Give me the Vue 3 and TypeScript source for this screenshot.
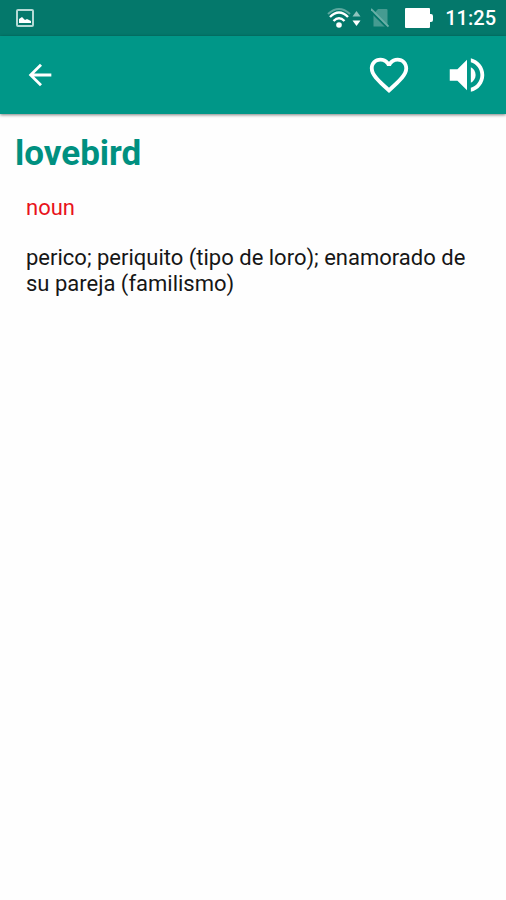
<script setup lang="ts">
import { ref } from 'vue'

interface Entry {
  word: string
  partOfSpeech: string
  definition: string
}

const entry: Entry = {
  word: 'lovebird',
  partOfSpeech: 'noun',
  definition: 'perico; periquito (tipo de loro); enamorado de su pareja (familismo)',
}

const favourite = ref(false)
</script>

<template>
  <div class="screen">
    <div class="status">
      <svg class="picture" viewBox="0 0 18 18" aria-hidden="true">
        <rect x="1" y="1" width="16" height="16" rx="1" fill="none" stroke="#b5dad5" stroke-width="2" />
        <path d="M3 14V10l3-2 3 3 2-1 4 2v2z" fill="#fff" />
      </svg>
      <div class="tray">
        <svg class="wifi" viewBox="0 0 34 22" aria-hidden="true">
          <path d="M1 7Q12-3 23 7" fill="none" stroke="#5ca79e" stroke-width="2" />
          <g fill="none" stroke="#fff" stroke-width="2.4">
            <path d="M3 10Q12 1 21 10" />
            <path d="M6.500 14Q12 8.500 17.500 14" />
          </g>
          <circle cx="12" cy="18" r="2.800" fill="#fff" />
          <path d="M25.500 9.500L29.500 4l4 5.500z" fill="#8fc4bd" />
          <path d="M25.500 13.500h8L29.500 19z" fill="#fff" />
        </svg>
        <svg class="sim" viewBox="0 0 18 20" aria-hidden="true">
          <path d="M7 1h8.500q1 0 1 1v16.500h-14V6z" fill="#469b91" />
          <path d="M0 3.500L16 19.500" stroke="#04786b" stroke-width="2" />
          <path d="M0 1L17.500 18.500" stroke="#6ab0a7" stroke-width="1.800" />
        </svg>
        <svg class="battery" viewBox="0 0 28 20" aria-hidden="true">
          <path d="M1 0h23q1 0 1 1v5h1q2 0 2 2v4q0 2-2 2h-1v5q0 1-1 1H1q-1 0-1-1V1q0-1 1-1z" fill="#fff" />
        </svg>
        <time class="clock">11:25</time>
      </div>
    </div>
    <header class="toolbar">
      <button type="button" class="action" aria-label="Back">
        <svg class="arrow" viewBox="0 0 24 24">
          <path d="M20 11H7.830l5.590-5.590L12 4l-8 8 8 8 1.410-1.410L7.830 13H20v-2z" />
        </svg>
      </button>
      <div class="actions">
        <button type="button" class="action" aria-label="Favourite" :aria-pressed="favourite" @click="favourite = !favourite">
          <svg class="glyph" viewBox="0 0 24 24">
            <path v-if="favourite" d="M12 21.350l-1.450-1.320C5.400 15.360 2 12.280 2 8.500 2 5.420 4.420 3 7.500 3c1.740 0 3.410.81 4.500 2.090C13.090 3.810 14.760 3 16.500 3 19.580 3 22 5.420 22 8.500c0 3.780-3.400 6.860-8.550 11.540L12 21.350z" />
            <path v-else d="M16.500 3c-1.740 0-3.410.81-4.500 2.090C10.910 3.810 9.240 3 7.500 3 4.420 3 2 5.420 2 8.500c0 3.780 3.400 6.860 8.550 11.540L12 21.350l1.450-1.320C18.600 15.360 22 12.280 22 8.500 22 5.420 19.580 3 16.500 3zm-4.400 15.550l-.1.100-.1-.1C7.140 14.240 4 11.390 4 8.500 4 6.500 5.500 5 7.500 5c1.540 0 3.040.99 3.570 2.360h1.870C13.460 5.990 14.960 5 16.500 5c2 0 3.500 1.500 3.500 3.500 0 2.890-3.140 5.740-7.900 10.050z" />
          </svg>
        </button>
        <button type="button" class="action" aria-label="Listen">
          <svg class="glyph" viewBox="0 0 24 24">
            <path d="M3 9v6h4l5 5V4L7 9H3zm13.500 3c0-1.770-1.020-3.290-2.500-4.030v8.050c1.480-.73 2.500-2.250 2.500-4.020zM14 3.230v2.060c2.890.86 5 3.540 5 6.710s-2.110 5.850-5 6.710v2.060c4.010-.91 7-4.490 7-8.770s-2.990-7.860-7-8.770z" />
          </svg>
        </button>
      </div>
    </header>
    <main class="entry">
      <h1 class="word">{{ entry.word }}</h1>
      <section class="sense">
        <p class="part">{{ entry.partOfSpeech }}</p>
        <p class="definition">{{ entry.definition }}</p>
      </section>
    </main>
  </div>
</template>

<style>
body {
  margin: 0;
  background: #fefefe;
}
</style>

<style scoped>
.screen {
  min-height: 100vh;
  font-family: Roboto, "Liberation Sans", sans-serif;
  background: #fefefe;
}

.status {
  display: flex;
  align-items: center;
  justify-content: space-between;
  height: 36px;
  padding: 0 10px 0 16px;
  background: #04786b;
}

.tray {
  display: flex;
  align-items: center;
}

.picture {
  width: 18px;
  height: 18px;
}

.wifi {
  width: 34px;
  height: 22px;
  margin-right: 10px;
}

.sim {
  width: 18px;
  height: 20px;
  margin-right: 16px;
}

.battery {
  width: 28px;
  height: 20px;
  margin-right: 12px;
}

.clock {
  color: #fff;
  font-size: 20px;
  font-weight: 500;
  line-height: 24px;
}

.toolbar {
  display: flex;
  align-items: center;
  justify-content: space-between;
  height: 78px;
  padding: 0 15px 0 16px;
  background: #009788;
  box-shadow: 0 1px 3px rgba(0, 0, 0, 0.5);
}

.actions {
  display: flex;
  gap: 30px;
}

.action {
  display: flex;
  align-items: center;
  justify-content: center;
  width: 48px;
  height: 48px;
  padding: 0;
  border: 0;
  background: none;
  cursor: pointer;
}

.action svg {
  fill: #fff;
}

.arrow {
  width: 34px;
  height: 34px;
}

.glyph {
  width: 46px;
  height: 46px;
}

.entry {
  padding: 19px 15px;
}

.word {
  margin: 0;
  color: #009080;
  font-size: 35px;
  font-weight: 700;
  line-height: 42px;
}

.sense {
  padding: 20px 11px;
  font-size: 22px;
  line-height: 26px;
}

.part {
  margin: 0 0 24px;
  color: #e8131b;
}

.definition {
  margin: 0;
  color: #161616;
}
</style>
